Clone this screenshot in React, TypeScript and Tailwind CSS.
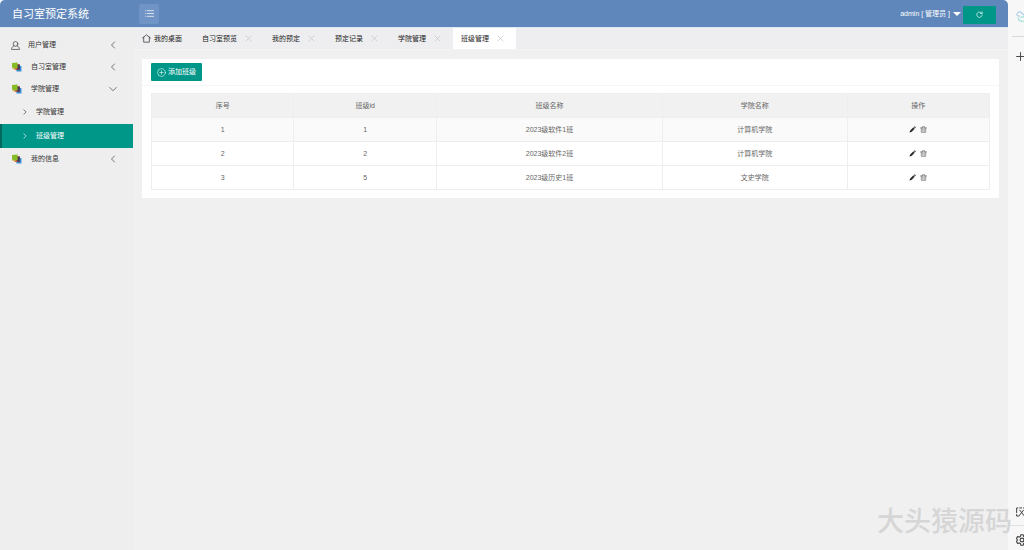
import type { ReactNode } from 'react';

type IconProps = { className?: string };

function Stroke({ className = '', width = 1, children }: IconProps & { width?: number; children: ReactNode }) {
  return (
    <svg
      viewBox="0 0 16 16"
      fill="none"
      stroke="currentColor"
      strokeWidth={width}
      strokeLinecap="round"
      strokeLinejoin="round"
      aria-hidden="true"
      className={'shrink-0 ' + className}
    >
      {children}
    </svg>
  );
}

const UserIcon = ({ className }: IconProps) => (
  <Stroke className={className} width={1.3}>
    <circle cx="8" cy="5.2" r="4.2" />
    <path d="M5.2 8.4C2.6 9.7 1.2 11.7.9 15H15.100C14.800 11.700 13.400 9.700 10.800 8.400" />
  </Stroke>
);

const StackIcon = ({ className = '' }: IconProps) => (
  <svg viewBox="0 0 20 18" aria-hidden="true" className={'shrink-0 ' + className}>
    <path d="M9 7h9v10H9z" fill="#3b8ed8" />
    <path d="M6 4h9v10H6z" fill="#a8323a" />
    <path d="M11 5h4v9h-4z" fill="#40405c" />
    <path d="M1 2l10-1v10l-7 1-3-3z" fill="#84bd25" />
    <path d="M1 9l3 3 5-1v2H4L1 11z" fill="#d8a324" />
  </svg>
);

const ChevronLeft = ({ className }: IconProps) => (
  <Stroke className={className} width={1.3}><path d="M11 2L5 8l6 6" /></Stroke>
);
const ChevronDown = ({ className }: IconProps) => (
  <Stroke className={className} width={1.3}><path d="M1.5 5L8 11.5 14.5 5" /></Stroke>
);
const ChevronRight = ({ className }: IconProps) => (
  <Stroke className={className} width={1.7}><path d="M5 2l6 6-6 6" /></Stroke>
);
const HomeIcon = ({ className }: IconProps) => (
  <Stroke className={className} width={1.2}>
    <path d="M1 7L8 1.500l7 5.500M3 6V14.500H13V6" />
  </Stroke>
);
const CloseIcon = ({ className }: IconProps) => (
  <Stroke className={className} width={1.5}><path d="M2 2l12 12M14 2L2 14" /></Stroke>
);
const ListIcon = ({ className }: IconProps) => (
  <Stroke className={className} width={1.3}>
    <path d="M1 3h.5M4.500 3h11M1 8h.5M4.500 8h11M1 13h.5M4.500 13h11" />
  </Stroke>
);
const RefreshIcon = ({ className }: IconProps) => (
  <Stroke className={className} width={1.5}>
    <path d="M13.5 5.5A6.2 6.2 0 1 0 14.2 9M14 1.8v4h-4" />
  </Stroke>
);
const AddIcon = ({ className }: IconProps) => (
  <Stroke className={className} width={1}>
    <circle cx="8" cy="8" r="7" />
    <path d="M8 5v6M5 8h6" />
  </Stroke>
);
const PencilIcon = ({ className = '' }: IconProps) => (
  <svg viewBox="0 0 16 16" fill="currentColor" aria-hidden="true" className={'shrink-0 ' + className}>
    <path d="M1 15l1.500-5L10 3l3.200 3.200L6 13.600zM11 2l2-1.500 2.600 2.600L14.200 5z" />
  </svg>
);
const TrashIcon = ({ className }: IconProps) => (
  <Stroke className={className} width={1.500}>
    <path d="M1 4.500h14M5 4V1.800h6V4M3 5v9.500h10V5M6.300 7v5M9.700 7v5" />
  </Stroke>
);

const tabs = ['自习室预览', '我的预定', '预定记录', '学院管理', '班级管理'];

const headings = ['序号', '班级id', '班级名称', '学院名称', '操作'];

const rows = [
  { no: 1, id: 1, name: '2023级软件1班', college: '计算机学院' },
  { no: 2, id: 2, name: '2023级软件2班', college: '计算机学院' },
  { no: 3, id: 5, name: '2023级历史1班', college: '文史学院' },
];

function MenuItem({ label, icon, open = false }: { label: string; icon: 'user' | 'stack'; open?: boolean }) {
  return (
    <a href="#" className="flex h-[22px] items-center pl-[11px] pr-4">
      {icon === 'user' ? (
        <UserIcon className="mr-2 h-[9px] w-[9px] text-[#444]" />
      ) : (
        <StackIcon className="mr-2 h-[10px] w-3" />
      )}
      <span className="flex-1">{label}</span>
      {open ? <ChevronDown className="h-2 w-2" /> : <ChevronLeft className="h-2 w-2" />}
    </a>
  );
}

function SubItem({ label, active = false }: { label: string; active?: boolean }) {
  return (
    <a
      href="#"
      aria-current={active ? 'page' : undefined}
      className={
        'flex h-6 items-center gap-2 border-l-2 pl-5 ' +
        (active ? 'border-[#00695f] bg-[#009688] text-white' : 'border-transparent')
      }
    >
      <ChevronRight className="h-[6px] w-[6px]" />
      {label}
    </a>
  );
}

export default function App() {
  return (
    <div className="flex min-h-screen bg-[#f7f7f8] font-['Liberation_Sans','Noto_Sans_CJK_SC',sans-serif] text-[7px] leading-3 text-[#333] antialiased">
      <div className="relative flex min-w-0 flex-1 flex-col overflow-hidden rounded-t-[5px] bg-[#f0f0f0]">
        <header className="flex h-7 items-center border-b border-[#dfe7f3] bg-[#5f87bb] text-white">
          <h1 className="w-[139px] shrink-0 pl-3 text-[11px] leading-4">自习室预定系统</h1>
          <button type="button" aria-label="切换菜单" className="flex h-5 w-5 items-center justify-center rounded-xs bg-[#7094c5]">
            <ListIcon className="h-[9px] w-[9px]" />
          </button>
          <button type="button" className="ml-auto flex items-center gap-[3px]">
            admin [ 管理员 ]
            <svg viewBox="0 0 8 4" aria-hidden="true" className="h-1 w-2">
              <path d="M0 0h8L4 4z" fill="currentColor" />
            </svg>
          </button>
          <button type="button" aria-label="刷新" className="ml-[2px] mr-3 mt-[2px] flex h-[18px] w-[33px] items-center justify-center rounded-[1px] bg-[#009688]">
            <RefreshIcon className="h-[7px] w-[7px]" />
          </button>
        </header>

        <div className="flex flex-1">
          <nav className="w-[133px] shrink-0 bg-[#eeeeee] pt-[6px]">
            <MenuItem label="用户管理" icon="user" />
            <MenuItem label="自习室管理" icon="stack" />
            <MenuItem label="学院管理" icon="stack" open />
            <SubItem label="学院管理" />
            <SubItem label="班级管理" active />
            <MenuItem label="我的信息" icon="stack" />
          </nav>

          <main className="min-w-0 flex-1">
            <div className="flex h-[22px] border-b border-[#f3f3f3] bg-[#eeeef0] text-[#222]">
              <a href="#" className="flex w-[61px] items-center gap-[3px] pl-[9px]">
                <HomeIcon className="h-[9px] w-[9px]" />
                我的桌面
              </a>
              {tabs.map((tab, i) => (
                <div
                  key={tab}
                  className={'flex items-center gap-2 pl-2 pr-3 ' + (i === tabs.length - 1 ? 'bg-white' : '')}
                >
                  <a href="#">{tab}</a>
                  <button type="button" aria-label={'关闭' + tab} className="text-[#c4c4c4]">
                    <CloseIcon className="h-[7px] w-[7px]" />
                  </button>
                </div>
              ))}
            </div>

            <section className="ml-[9px] mr-[9px] mt-[9px] bg-white pb-2">
              <div className="border-b border-[#f6f6f6] px-[9px] pb-1 pt-1">
                <button type="button" className="flex h-[18px] items-center gap-[2px] rounded-[1px] bg-[#009688] px-[6px] text-white">
                  <AddIcon className="h-[9px] w-[9px]" />
                  添加班级
                </button>
              </div>
              <div className="px-[9px] pt-[7px]">
                <table className="w-full table-fixed border-collapse text-center text-[#666]">
                  <colgroup>
                    <col className="w-[17%]" />
                    <col className="w-[17%]" />
                    <col className="w-[27%]" />
                    <col className="w-[22%]" />
                    <col className="w-[17%]" />
                  </colgroup>
                  <thead>
                    <tr className="h-6 bg-[#f1f1f1]">
                      {headings.map((heading) => (
                        <th key={heading} className="border border-[#eeeeee] font-normal">{heading}</th>
                      ))}
                    </tr>
                  </thead>
                  <tbody>
                    {rows.map((row) => (
                      <tr key={row.no} className="h-6 first:bg-[#fafafa]">
                        <td className="border border-[#eeeeee]">{row.no}</td>
                        <td className="border border-[#eeeeee]">{row.id}</td>
                        <td className="border border-[#eeeeee]">{row.name}</td>
                        <td className="border border-[#eeeeee]">{row.college}</td>
                        <td className="border border-[#eeeeee]">
                          <div className="flex items-center justify-center gap-1">
                            <button type="button" aria-label={'编辑' + row.name} className="text-[#333]">
                              <PencilIcon className="h-[7px] w-[7px]" />
                            </button>
                            <button type="button" aria-label={'删除' + row.name}>
                              <TrashIcon className="h-[7px] w-[7px]" />
                            </button>
                          </div>
                        </td>
                      </tr>
                    ))}
                  </tbody>
                </table>
              </div>
            </section>
          </main>
        </div>
      </div>

      <aside className="flex w-4 shrink-0 flex-col overflow-hidden pl-2 text-[#444]">
        <svg viewBox="0 0 16 16" fill="none" strokeWidth="1.4" aria-hidden="true" className="mt-[10px] h-3 w-3 shrink-0">
          <path d="M2 8A3.500 3.500 0 1 1 8 4.500L11 7" stroke="#a4c9e6" />
          <path d="M2 8h3" stroke="#a4c9e6" />
          <path d="M3 10c0 3 2 5 5 5h6M6 11a3 3 0 0 1 5-1" stroke="#94ddd4" />
        </svg>
        <hr className="-ml-1 mt-[14px] w-4 border-[#d9d9d9]" />
        <Stroke className="mt-[15px] h-[9px] w-[9px]" width={1.7}><path d="M8 1v14M1 8h14" /></Stroke>
        <div className="mt-auto flex flex-col">
          <Stroke className="h-[10px] w-[10px]" width={1.6}>
            <path d="M1 9V1.500h2M6 1.500h3M12 1.500h3V9M1 12v2.500h3M6 5l7 9M12 5l-7 9" />
          </Stroke>
          <hr className="-ml-2 mt-2 w-4 border-[#e2e2e2]" />
          <Stroke className="mb-1 mt-2 h-3 w-3" width={1.5}>
            <path d="M6.500 1h3l.6 2.200 1.600.9 2.200-.6 1.500 2.600L13.800 8l1.600 1.900-1.500 2.600-2.200-.6-1.600.9L9.500 15h-3l-.6-2.200-1.600-.9-2.200.6L.6 9.900 2.200 8 .6 6.100l1.500-2.600 2.200.6 1.600-.9z" />
            <circle cx="8" cy="8" r="2.500" />
          </Stroke>
        </div>
      </aside>

      <div className="pointer-events-none absolute bottom-3 right-3 text-[27px] font-medium leading-8 text-[#d6d6d6]">大头猿源码</div>
    </div>
  );
}
